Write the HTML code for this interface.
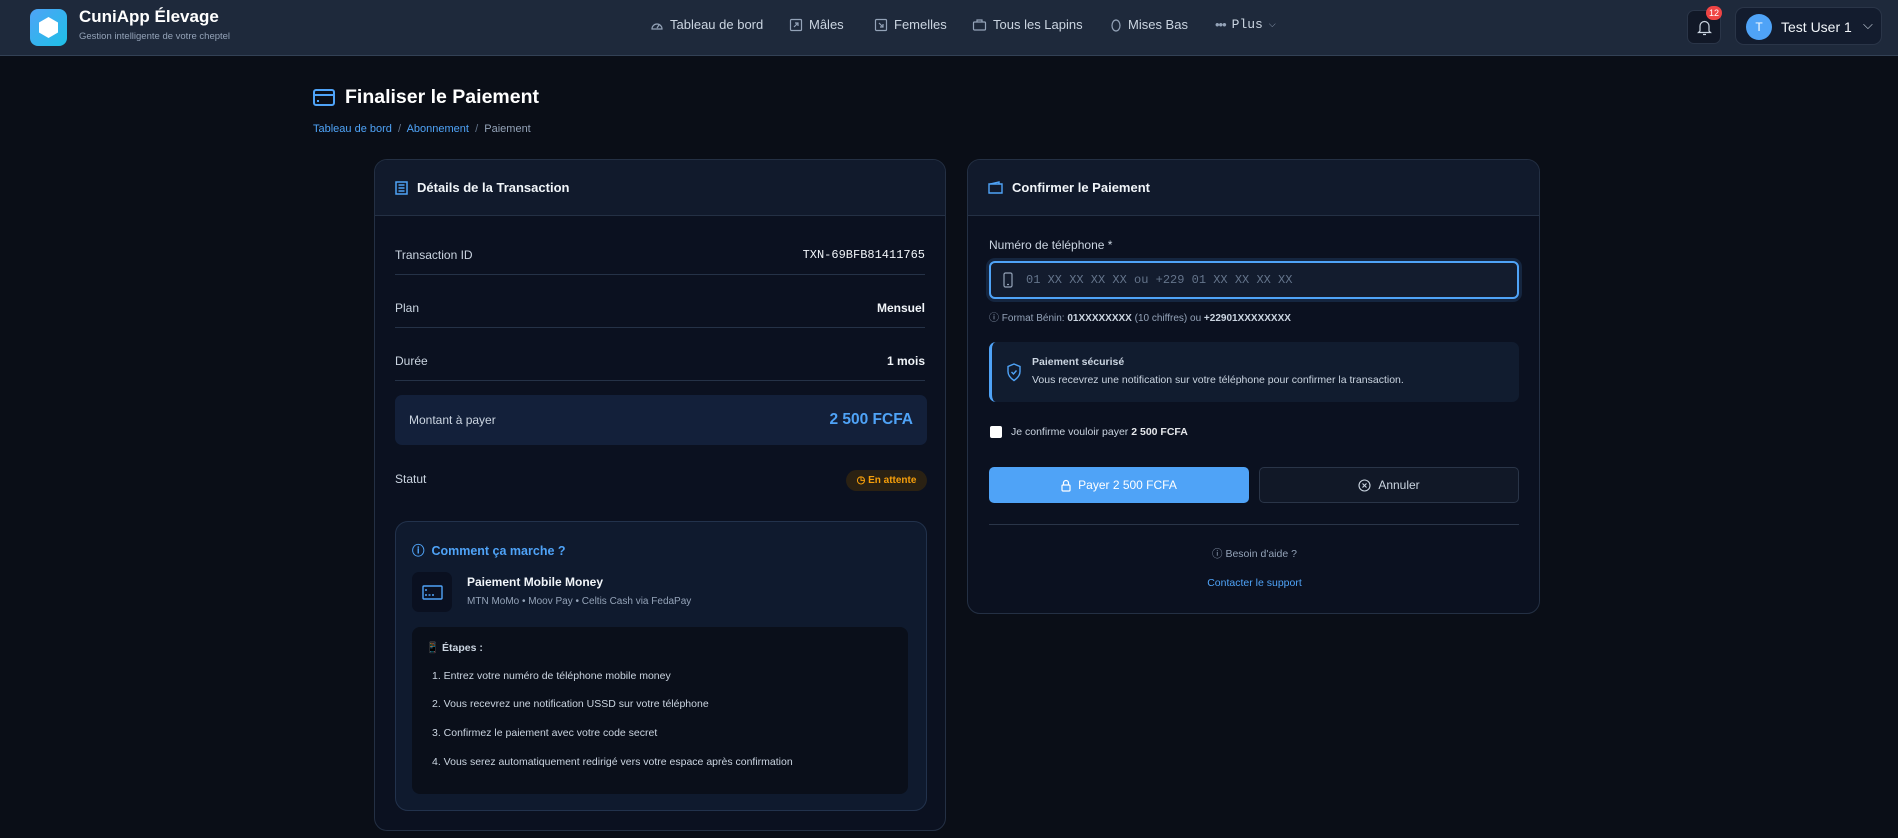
<!DOCTYPE html>
<html><head><meta charset="utf-8"><style>
*{box-sizing:border-box;margin:0;padding:0}
body{width:1898px;height:838px;background:#0a0e17;font-family:"Liberation Sans",sans-serif;color:#e5e7eb;position:relative;overflow:hidden}
.abs{position:absolute}
.nav{left:0;top:0;width:1898px;height:56px;background:#1e293b;border-bottom:1px solid #334155}
.navi{top:17px;font-size:13px;color:#cbd5e1;display:flex;align-items:center;gap:6px}
.card{border:1px solid #243044;border-radius:13px;background:#0b1120;overflow:hidden}
.chead{height:56px;background:#111a2c;border-bottom:1px solid #243044;display:flex;align-items:center;padding-left:20px;font-weight:bold;font-size:13px;color:#f1f5f9;gap:9px}
.row{position:absolute;left:20px;right:20px;height:40px;border-bottom:1px solid #253247;font-size:12px;color:#cbd5e1;display:flex;justify-content:space-between;align-items:center}
.row b{color:#f1f5f9;font-size:12px}
.mono{font-family:"Liberation Mono",monospace}
</style></head><body>
<div class="abs nav">
 <div class="abs" style="left:30px;top:9px;width:37px;height:37px;border-radius:8px;background:linear-gradient(135deg,#4fa3f7,#1ec0e6)">
  <svg width="37" height="37" viewBox="0 0 37 37"><polygon points="18.5,8 28,13.5 28,23.5 18.5,29 9,23.5 9,13.5" fill="#fff"/></svg></div>
 <div class="abs" style="left:79px;top:7px;font-size:17px;font-weight:bold;color:#fff">CuniApp Élevage</div>
 <div class="abs" style="left:79px;top:31px;font-size:9.5px;color:#94a3b8">Gestion intelligente de votre cheptel</div>
 <div class="abs navi" style="left:650px"><svg width="14" height="14" viewBox="0 0 14 14" fill="none" stroke="#94a3b8" stroke-width="1.2"><path d="M2 11a5 5 0 1 1 10 0z"/><path d="M7 10l2-3"/></svg>Tableau de bord</div>
 <div class="abs navi" style="left:789px"><svg width="14" height="14" viewBox="0 0 14 14" fill="none" stroke="#94a3b8" stroke-width="1.2"><rect x="1.5" y="1.5" width="11" height="11" rx="1"/><path d="M5 9l4-4M6 5h3v3"/></svg>Mâles</div>
 <div class="abs navi" style="left:874px"><svg width="14" height="14" viewBox="0 0 14 14" fill="none" stroke="#94a3b8" stroke-width="1.2"><rect x="1.5" y="1.5" width="11" height="11" rx="1"/><path d="M5 5l4 4M6 9h3V6"/></svg>Femelles</div>
 <div class="abs navi" style="left:972px"><svg width="15" height="14" viewBox="0 0 15 14" fill="none" stroke="#94a3b8" stroke-width="1.2"><rect x="1.5" y="4" width="12" height="8" rx="1"/><path d="M5 4V2h5v2"/></svg>Tous les Lapins</div>
 <div class="abs navi" style="left:1110px"><svg width="12" height="14" viewBox="0 0 12 14" fill="none" stroke="#94a3b8" stroke-width="1.2"><ellipse cx="6" cy="7.5" rx="4" ry="5.5"/></svg>Mises Bas</div>
 <div class="abs navi" style="left:1215px"><span style="letter-spacing:-1px;color:#94a3b8">•••</span><span class="mono">Plus</span><span style="font-size:9px;color:#94a3b8">⌵</span></div>
 <div class="abs" style="left:1687px;top:10px;width:34px;height:34px;border-radius:7px;background:#111827;border:1px solid #2a3548">
  <svg class="abs" style="left:9px;top:8px" width="15" height="17" viewBox="0 0 15 17" fill="none" stroke="#cbd5e1" stroke-width="1.2"><path d="M3 12V7a4.5 4.5 0 0 1 9 0v5l1.5 1.5h-12z"/><path d="M6 15.5h3"/></svg></div>
 <div class="abs" style="left:1706px;top:6px;width:16px;height:14px;border-radius:7px;background:#ef4444;color:#fff;font-size:9px;text-align:center;line-height:14px">12</div>
 <div class="abs" style="left:1735px;top:7px;width:147px;height:38px;border-radius:9px;background:#131c2e;border:1px solid #2a3548">
  <div class="abs" style="left:10px;top:6px;width:26px;height:26px;border-radius:13px;background:#4fa3f7;color:#fff;font-size:12px;text-align:center;line-height:26px">T</div>
  <div class="abs" style="left:45px;top:11px;font-size:14px;color:#f1f5f9">Test User 1</div>
  <div class="abs" style="left:127px;top:9px;font-size:13px;color:#cbd5e1">⌵</div>
 </div>
</div>

<svg class="abs" style="left:313px;top:89px" width="22" height="17" viewBox="0 0 22 17" fill="none" stroke="#4fa3f7" stroke-width="2"><rect x="1" y="1" width="20" height="15" rx="2"/><path d="M1 6h20"/><path d="M4 12h2"/></svg>
<div class="abs" style="left:345px;top:86px;font-size:19.5px;font-weight:bold;color:#fff">Finaliser le Paiement</div>
<div class="abs" style="left:313px;top:123px;font-size:11px;color:#64748b"><span style="color:#4fa3f7">Tableau de bord</span> &nbsp;/&nbsp; <span style="color:#4fa3f7">Abonnement</span> &nbsp;/&nbsp; <span style="color:#94a3b8">Paiement</span></div>

<div class="abs card" style="left:374px;top:159px;width:572px;height:672px">
 <div class="chead"><svg width="13" height="14" viewBox="0 0 13 14" fill="none" stroke="#4fa3f7" stroke-width="1.5"><rect x="1" y="1" width="11" height="12"/><path d="M3.5 4h6M3.5 7h6M3.5 10h6"/></svg>Détails de la Transaction</div>
 <div class="row" style="top:75px"><span>Transaction ID</span><span class="mono" style="color:#f1f5f9;font-size:12px">TXN-69BFB81411765</span></div>
 <div class="row" style="top:128px"><span>Plan</span><b>Mensuel</b></div>
 <div class="row" style="top:181px"><span>Durée</span><b>1 mois</b></div>
 <div class="abs" style="left:20px;top:235px;width:532px;height:50px;border-radius:7px;background:#13203a;display:flex;justify-content:space-between;align-items:center;padding:0 14px;font-size:12px;color:#cbd5e1"><span>Montant à payer</span><span style="color:#4fa3f7;font-weight:bold;font-size:15.5px">2 500 FCFA</span></div>
 <div class="abs" style="left:20px;top:312px;font-size:12px;color:#cbd5e1">Statut</div>
 <div class="abs" style="left:471px;top:310px;width:81px;height:21px;border-radius:11px;background:#2a2113;color:#f59e0b;font-size:10px;font-weight:bold;text-align:center;line-height:21px">◷ En attente</div>
 <div class="abs" style="left:20px;top:361px;width:532px;height:290px;border-radius:13px;background:#0f1a2e;border:1px solid #22324c">
  <div class="abs" style="left:16px;top:18px;font-size:12.5px;font-weight:bold;color:#4fa3f7">ⓘ&nbsp; Comment ça marche ?</div>
  <div class="abs" style="left:16px;top:50px;width:40px;height:40px;border-radius:7px;background:#0a1020">
   <svg class="abs" style="left:10px;top:13px" width="21" height="15" viewBox="0 0 21 15" fill="none" stroke="#4fa3f7" stroke-width="1.4"><rect x="1" y="1" width="19" height="13" rx="1"/><path d="M3 5h2M3 10h10" stroke-dasharray="2 1.5"/></svg></div>
  <div class="abs" style="left:71px;top:53px;font-size:12px;font-weight:bold;color:#f1f5f9">Paiement Mobile Money</div>
  <div class="abs" style="left:71px;top:74px;font-size:10px;color:#94a3b8">MTN MoMo • Moov Pay • Celtis Cash via FedaPay</div>
  <div class="abs" style="left:16px;top:105px;width:496px;height:167px;border-radius:8px;background:#0a0f1a;font-size:10.5px;color:#cbd5e1">
   <div class="abs" style="left:14px;top:14px;font-weight:bold">📱 Étapes :</div>
   <div class="abs" style="left:20px;top:43px">1. Entrez votre numéro de téléphone mobile money</div>
   <div class="abs" style="left:20px;top:71px">2. Vous recevrez une notification USSD sur votre téléphone</div>
   <div class="abs" style="left:20px;top:100px">3. Confirmez le paiement avec votre code secret</div>
   <div class="abs" style="left:20px;top:129px">4. Vous serez automatiquement redirigé vers votre espace après confirmation</div>
  </div>
 </div>
</div>

<div class="abs card" style="left:967px;top:159px;width:573px;height:455px">
 <div class="chead"><svg width="15" height="13" viewBox="0 0 15 13" fill="none" stroke="#4fa3f7" stroke-width="1.4"><path d="M1 3h13v9H1z"/><path d="M2 3l9-2v2"/></svg>Confirmer le Paiement</div>
 <div class="abs" style="left:21px;top:78px;font-size:12px;color:#cbd5e1">Numéro de téléphone *</div>
 <div class="abs" style="left:21px;top:101px;width:530px;height:38px;border-radius:6px;border:2px solid #4fa3f7;background:#131c2e;box-shadow:0 0 0 3px rgba(79,163,247,.15)">
  <svg class="abs" style="left:12px;top:9px" width="10" height="16" viewBox="0 0 10 16" fill="none" stroke="#94a3b8" stroke-width="1.2"><rect x="1" y="1" width="8" height="14" rx="1.5"/><path d="M4 12.5h2"/></svg>
  <div class="abs mono" style="left:35px;top:10px;font-size:12px;color:#64748b">01 XX XX XX XX ou +229 01 XX XX XX XX</div>
 </div>
 <div class="abs" style="left:21px;top:149px;font-size:10px;color:#94a3b8">ⓘ Format Bénin: <b style="color:#cbd5e1">01XXXXXXXX</b> (10 chiffres) ou <b style="color:#cbd5e1">+22901XXXXXXXX</b></div>
 <div class="abs" style="left:21px;top:182px;width:530px;height:60px;border-radius:7px;background:#111c2f;border-left:3px solid #4fa3f7">
  <svg class="abs" style="left:14px;top:21px" width="16" height="19" viewBox="0 0 16 19" fill="none" stroke="#4fa3f7" stroke-width="1.4"><path d="M8 1l6 2.5v5c0 4-3 7-6 9-3-2-6-5-6-9v-5z"/><path d="M5.5 9l2 2 3-3.5"/></svg>
  <div class="abs" style="left:40px;top:14px;font-size:10.5px;font-weight:bold;color:#cbd5e1">Paiement sécurisé</div>
  <div class="abs" style="left:40px;top:32px;font-size:10.5px;color:#cbd5e1">Vous recevrez une notification sur votre téléphone pour confirmer la transaction.</div>
 </div>
 <div class="abs" style="left:22px;top:266px;width:12px;height:12px;background:#fff;border-radius:2px"></div>
 <div class="abs" style="left:43px;top:266px;font-size:10.5px;color:#cbd5e1">Je confirme vouloir payer <b style="color:#e5e7eb">2 500 FCFA</b></div>
 <div class="abs" style="left:21px;top:307px;width:260px;height:36px;border-radius:5px;background:#4fa3f7;color:#fff;font-size:12px;display:flex;align-items:center;justify-content:center;gap:7px"><svg width="10" height="13" viewBox="0 0 10 13" fill="none" stroke="#fff" stroke-width="1.2"><rect x="1" y="6" width="8" height="6" rx="1"/><path d="M2.5 6V4a2.5 2.5 0 0 1 5 0v2"/></svg>Payer 2 500 FCFA</div>
 <div class="abs" style="left:291px;top:307px;width:260px;height:36px;border-radius:5px;background:#111827;border:1px solid #2a3548;color:#cbd5e1;font-size:12px;display:flex;align-items:center;justify-content:center;gap:7px"><svg width="13" height="13" viewBox="0 0 13 13" fill="none" stroke="#cbd5e1" stroke-width="1.1"><circle cx="6.5" cy="6.5" r="5.5"/><path d="M4.5 4.5l4 4M8.5 4.5l-4 4"/></svg>Annuler</div>
 <div class="abs" style="left:21px;top:364px;width:530px;height:1px;background:#2a3548"></div>
 <div class="abs" style="left:0;width:573px;top:386px;text-align:center;font-size:10.5px;color:#94a3b8">ⓘ Besoin d'aide ?</div>
 <div class="abs" style="left:0;width:573px;top:417px;text-align:center;font-size:10.5px;color:#4fa3f7">Contacter le support</div>
</div>
</body></html>
